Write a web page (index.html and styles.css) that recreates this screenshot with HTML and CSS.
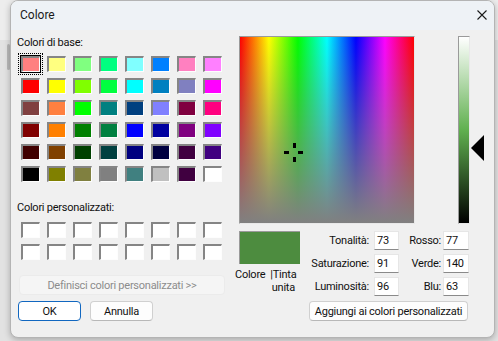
FILE: index.html
```html
<!DOCTYPE html>
<html lang="it">
<head>
    <meta charset="UTF-8">
    <title>Colore</title>
    <link rel="stylesheet" href="styles.css">
</head>
<body>
    <div class="backdrop-strip"></div>
    <div class="dialog">
        <!-- Title bar -->
        <div class="titlebar">
            <span class="title">Colore</span>
            <button class="close" aria-label="Chiudi">
                <svg width="10" height="10" viewBox="0 0 10 10">
                    <path d="M0.5 0.5 L9.5 9.5 M9.5 0.5 L0.5 9.5" stroke="#1a1a1a" stroke-width="1.1" fill="none"/>
                </svg>
            </button>
        </div>

        <div class="body">
            <!-- Left column: swatches -->
            <div class="left">
                <div class="label">Colori di base:</div>
                <div class="swatches" id="basic"></div>

                <div class="label custom-label">Colori personalizzati:</div>
                <div class="swatches custom" id="custom"></div>

                <button class="define" disabled>Definisci colori personalizzati &gt;&gt;</button>

                <div class="actions">
                    <button class="btn ok">OK</button>
                    <button class="btn">Annulla</button>
                </div>
            </div>

            <!-- Right column: picker -->
            <div class="right">
                <div class="picker">
                    <div class="spectrum">
                        <div class="crosshair" style="left: 54px; top: 116px;">
                            <i class="ch-top"></i><i class="ch-bottom"></i><i class="ch-left"></i><i class="ch-right"></i>
                        </div>
                    </div>
                    <div class="lum-wrap">
                        <div class="lum"></div>
                        <div class="lum-arrow" style="top: 99px;"></div>
                    </div>
                </div>

                <div class="info">
                    <div class="preview-col">
                        <div class="preview"></div>
                        <div class="preview-labels">
                            <span>Colore</span>
                            <span class="solid">|Tinta unita</span>
                        </div>
                    </div>
                    <div class="fields">
                        <label>Tonalità:</label><div class="field">73</div>
                        <label>Rosso:</label><div class="field">77</div>
                        <label>Saturazione:</label><div class="field">91</div>
                        <label>Verde:</label><div class="field">140</div>
                        <label>Luminosità:</label><div class="field">96</div>
                        <label>Blu:</label><div class="field">63</div>
                    </div>
                </div>

                <button class="btn add">Aggiungi ai colori personalizzati</button>
            </div>
        </div>
    </div>

    <script>
        // Standard basic colours, row by row
        const basicColors = [
            "#ff8080", "#ffff80", "#80ff80", "#00ff80", "#80ffff", "#0080ff", "#ff80c0", "#ff80ff",
            "#ff0000", "#ffff00", "#80ff00", "#00ff40", "#00ffff", "#0080c0", "#8080c0", "#ff00ff",
            "#804040", "#ff8040", "#00ff00", "#008080", "#004080", "#8080ff", "#800040", "#ff0080",
            "#800000", "#ff8000", "#008000", "#008040", "#0000ff", "#0000a0", "#800080", "#8000ff",
            "#400000", "#804000", "#004000", "#004040", "#000080", "#000040", "#400040", "#400080",
            "#000000", "#808000", "#808040", "#808080", "#408080", "#c0c0c0", "#400040", "#ffffff"
        ];

        const basic = document.getElementById("basic");
        basicColors.forEach((color, i) => {
            const cell = document.createElement("div");
            cell.className = i === 0 ? "swatch selected" : "swatch";
            cell.style.background = color;
            basic.appendChild(cell);
        });

        const custom = document.getElementById("custom");
        for (let i = 0; i < 16; i++) {
            const cell = document.createElement("div");
            cell.className = "swatch";
            cell.style.background = "#ffffff";
            custom.appendChild(cell);
        }
    </script>
</body>
</html>
```

FILE: styles.css
```css
/* Reset */
* {
    margin: 0;
    padding: 0;
    box-sizing: border-box;
}

body {
    width: 498px;
    height: 341px;
    overflow: hidden;
    background: linear-gradient(#ededed 0 40px, #e2e2e2 40px);
    font-family: "Segoe UI", Roboto, "Liberation Sans", sans-serif;
    font-size: 11px;
    letter-spacing: -0.25px;
    color: #111;
    position: relative;
}

.backdrop-strip {
    position: absolute;
    left: 7px;
    top: 44px;
    width: 3px;
    height: 26px;
    background: #b9b9b9;
    border-radius: 2px;
}

/* Dialog window */
.dialog {
    position: relative;
    margin-left: 10px;
    width: 485px;
    height: 338px;
    background: #f0f0f0;
    border: 1px solid #b4b4b4;
    border-radius: 8px;
    overflow: hidden;
    box-shadow: 0 2px 6px rgba(0, 0, 0, 0.25);
}

.titlebar {
    height: 29px;
    background: #eef2f6;
    display: flex;
    align-items: center;
    justify-content: space-between;
    padding: 0 7px 1px 9px;
}

.title {
    font-size: 12px;
    letter-spacing: 0;
    color: #1a1a1a;
}

.close {
    border: none;
    background: none;
    width: 10px;
    height: 10px;
    display: flex;
}

.body {
    display: flex;
}

/* Left column */
.left {
    width: 228px;
    padding: 6px 0 0 6px;
}

.label {
    height: 13px;
    line-height: 13px;
}

.swatches {
    display: grid;
    grid-template-columns: repeat(8, 19px);
    grid-auto-rows: 16px;
    column-gap: 7px;
    row-gap: 6px;
    margin: 7px 0 0 4px;
}

.swatch {
    position: relative;
    border-style: solid;
    border-width: 2px 1px 1px 2px;
    border-color: #858585 #fdfdfd #fdfdfd #858585;
}

.swatch.selected {
    outline: 1px solid #000;
    outline-offset: 0;
}

.swatch.selected::after {
    content: "";
    position: absolute;
    inset: -5px -4px -4px -5px;
    border: 1px dotted #000;
}

.custom-label {
    margin-top: 19px;
}

.swatches.custom {
    margin-top: 8px;
}

.define {
    display: block;
    width: 206px;
    height: 20px;
    margin: 15px 0 0 2px;
    background: #f5f5f5;
    border: 1px solid #ebebeb;
    border-radius: 4px;
    color: #8c8c8c;
    font: inherit;
    letter-spacing: inherit;
}

.actions {
    display: flex;
    gap: 9px;
    margin: 6px 0 0 1px;
}

.btn {
    width: 63px;
    height: 20px;
    background: #fdfdfd;
    border: 1px solid #d0d0d0;
    border-bottom-color: #b8b8b8;
    border-radius: 4px;
    font: inherit;
    letter-spacing: inherit;
    color: #111;
}

.btn.ok {
    border: 1px solid #1167c0;
    background: #fff;
}

/* Right column */
.right {
    padding-top: 6px;
}

.picker {
    display: flex;
}

.spectrum {
    position: relative;
    width: 176px;
    height: 188px;
    border: 1px solid #9a9a9a;
    border-right-color: #e8e8e8;
    border-bottom-color: #e8e8e8;
    background:
        linear-gradient(rgba(128, 128, 128, 0), #808080),
        linear-gradient(90deg, #ff0000, #ffff00 16.6%, #00ff00 33.3%, #00ffff 50%, #0000ff 66.6%, #ff00ff 83.3%, #ff0000);
}

.crosshair {
    position: absolute;
    width: 0;
    height: 0;
}

.crosshair i {
    position: absolute;
    background: #000;
}

.ch-top, .ch-bottom {
    width: 3px;
    height: 5px;
    left: -1px;
}

.ch-top { top: -10px; }
.ch-bottom { top: 4px; }

.ch-left, .ch-right {
    width: 5px;
    height: 3px;
    top: -2px;
}

.ch-left { left: -10px; }
.ch-right { left: 4px; }

.lum-wrap {
    position: relative;
    margin-left: 43px;
    width: 28px;
}

.lum {
    width: 12px;
    height: 188px;
    border: 1px solid #9a9a9a;
    border-right-color: #e8e8e8;
    border-bottom-color: #e8e8e8;
    background: linear-gradient(#ffffff, #60b04f 50%, #000000);
}

.lum-arrow {
    position: absolute;
    left: 13px;
    width: 0;
    height: 0;
    border-top: 13px solid transparent;
    border-bottom: 13px solid transparent;
    border-right: 13px solid #000;
}

.info {
    display: flex;
    margin-top: 7px;
}

.preview-col {
    width: 61px;
}

.preview {
    height: 33px;
    background: #4d8c3f;
    border-top: 1px solid #9a9a9a;
    border-left: 1px solid #9a9a9a;
}

.preview-labels {
    display: flex;
    margin: 4px 0 0 -4px;
    line-height: 13px;
}

.preview-labels .solid {
    width: 30px;
    margin-left: 3px;
    text-align: center;
}

.fields {
    display: grid;
    grid-template-columns: 74px 25px 44px 26px;
    grid-auto-rows: 19px;
    row-gap: 4px;
}

.fields label {
    text-align: right;
    padding-right: 5px;
    line-height: 19px;
}

.fields label:nth-of-type(even) {
    padding-right: 2px;
}

.field {
    background: #fff;
    border: 1px solid #e6e6e6;
    border-bottom-color: #8a8a8a;
    padding-left: 2px;
    line-height: 17px;
}

.add {
    display: block;
    width: 159px;
    margin: 5px 0 0 70px;
}
```
